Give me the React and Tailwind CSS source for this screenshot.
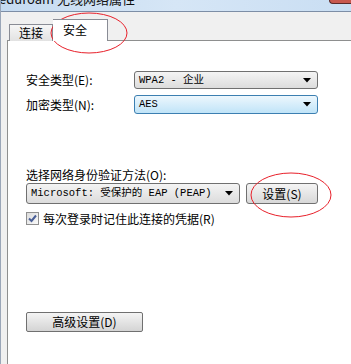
import React from "react";

const cjk = { fontFamily: '"Noto Sans CJK SC", "Liberation Sans", sans-serif' };
const mono = { fontFamily: '"Liberation Mono", "Noto Sans CJK SC", monospace' };

function Arrow() {
  return (
    <svg width="8" height="5" viewBox="0 0 8 5" className="shrink-0">
      <path d="M0 0 L8 0 L4 4.5 Z" fill="#000" />
    </svg>
  );
}

function Select({ value, focused, className }) {
  return (
    <div
      className={
        "flex items-center justify-between rounded-[3px] border pl-[4px] pr-[6px] text-[10.5px] text-black " +
        (focused
          ? "border-[#3c7fb1] bg-gradient-to-b from-[#edf7fd] to-[#c0e4f8]"
          : "border-[#707070] bg-gradient-to-b from-[#f4f4f4] to-[#dcdcdc]") +
        " " +
        className
      }
      style={mono}
    >
      <span className="leading-none whitespace-pre">{value}</span>
      <Arrow />
    </div>
  );
}

export default function App() {
  return (
    <div className="relative h-[364px] w-[351px] overflow-hidden bg-[#f0f0f0] border-l border-[#9aa6b8]" style={cjk}>
      {/* title bar */}
      <div className="flex h-[12px] items-start justify-between overflow-hidden border-b border-[#7d8ea6] bg-gradient-to-r from-[#c5dbf1] via-[#d6e6f6] to-[#c9def3]">
        <span className="mt-[-9px] ml-[-2px] whitespace-nowrap text-[13px] leading-[16px] text-[#111]">
          eduroam 无线网络属性
        </span>
        <div className="h-[4px] w-[22px] rounded-bl-[4px] border-b border-l border-[#5a2a2a] bg-[#c8584e]" />
      </div>

      {/* tab strip */}
      <div className="flex h-[28px] items-end pl-[8px]">
        <div className="mb-[-1px] flex h-[17px] w-[44px] items-center justify-center border border-b-0 border-[#898c95] bg-gradient-to-b from-[#f6f6f6] to-[#e2e2e2] text-[12px] leading-none">
          连接
        </div>
        <div className="relative z-10 mb-[-1px] flex h-[22px] w-[55px] items-start border border-b-0 border-l-0 border-[#898c95] bg-white pl-[10px] pt-[4px] text-[12px] leading-none">
          安全
        </div>
      </div>

      {/* panel */}
      <div className="ml-[6px] h-[400px] border-l border-t border-[#8e8f8f] bg-white pl-[18px] pt-[30px] text-[12px] text-black">
        <div className="grid grid-cols-[108px_184px] gap-y-[6px]">
          <div className="flex h-[18px] items-center leading-none">安全类型(E):</div>
          <Select value="WPA2 - 企业" className="h-[18px]" />
          <div className="flex h-[19px] items-center leading-none">加密类型(N):</div>
          <Select value="AES" focused className="h-[19px]" />
        </div>

        <div className="mt-[54px] leading-[14px]">选择网络身份验证方法(O):</div>
        <div className="mt-[1px] flex gap-[6px]">
          <Select value="Microsoft: 受保护的 EAP (PEAP)" className="h-[21px] w-[214px]" />
          <div className="flex h-[21px] w-[72px] items-center justify-center rounded-[3px] border border-[#707070] bg-gradient-to-b from-[#f4f4f4] to-[#d8d8d8] leading-none">
            设置(S)
          </div>
        </div>

        <div className="mt-[8px] flex items-center gap-[4px]">
          <div className="flex h-[13px] w-[13px] items-center justify-center border border-[#8f8f8f] bg-gradient-to-br from-[#dcdcdc] to-[#fafafa]">
            <svg width="9" height="9" viewBox="0 0 9 9">
              <path d="M1 4.5 L3.5 7 L8 1.5" fill="none" stroke="#4a5f97" strokeWidth="2" />
            </svg>
          </div>
          <span className="leading-none">每次登录时记住此连接的凭据(R)</span>
        </div>

        <div className="mt-[87px] flex h-[20px] w-[117px] items-center justify-center rounded-[2px] border border-[#707070] bg-gradient-to-b from-[#f4f4f4] to-[#d4d4d4] leading-none">
          高级设置(D)
        </div>
      </div>

      {/* red annotation ellipses */}
      <svg className="pointer-events-none absolute left-0 top-0" width="351" height="364">
        <ellipse cx="88" cy="33" rx="38" ry="20" fill="none" stroke="#e8202a" strokeWidth="1" />
        <ellipse cx="290" cy="195" rx="40" ry="22" fill="none" stroke="#e8202a" strokeWidth="1" />
      </svg>
    </div>
  );
}
